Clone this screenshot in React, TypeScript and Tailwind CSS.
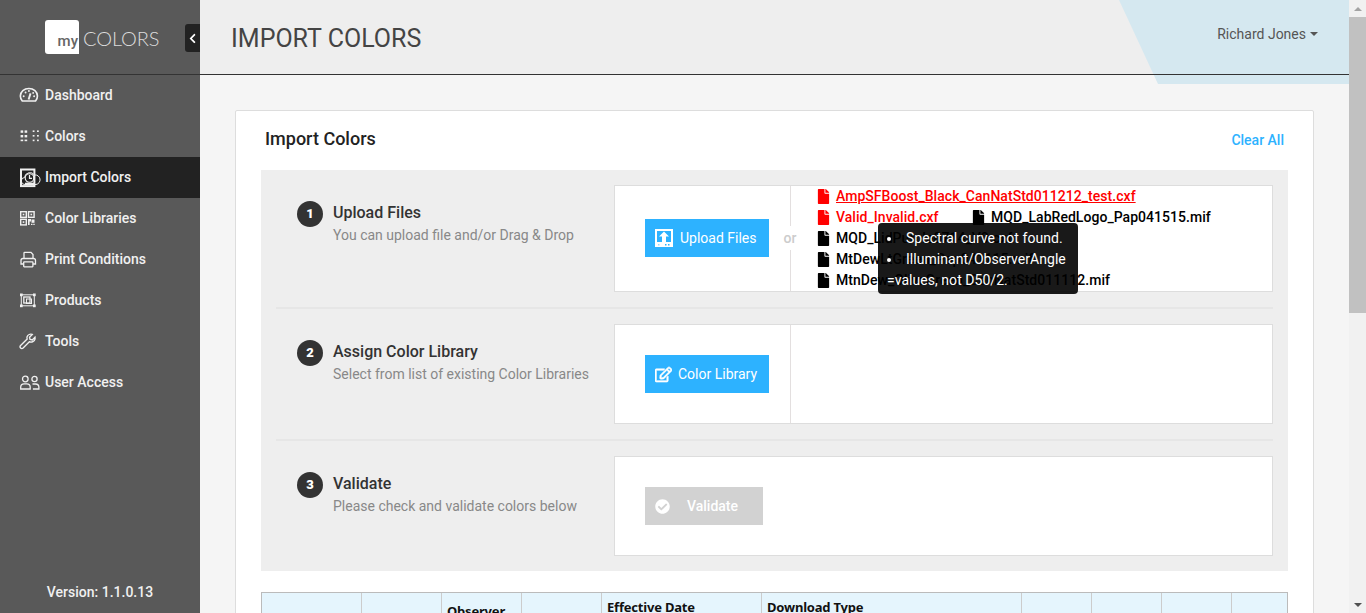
import { FaChevronLeft, FaFile, FaRegEdit, FaCheckCircle } from "react-icons/fa";

function Svg({ children }: { children: React.ReactNode }) {
  return (
    <svg width="20" height="20" viewBox="0 0 20 20" fill="none" stroke="currentColor" strokeWidth="1.3" className="shrink-0 overflow-visible">
      {children}
    </svg>
  );
}

const DashIcon = () => (
  <Svg>
    <g transform="translate(-.6 -.7) scale(.95)">
      <path d="M3 16.500C1.700 15 1 13.200 1 11.300 1 6.800 5 3.300 10 3.300s9 3.500 9 8c0 1.900-.7 3.700-2 5.200z" strokeWidth="1.700" />
      <path d="M9.700 15l2-6.500" strokeWidth="2" />
      <circle cx="4.500" cy="11.500" r="1" fill="currentColor" stroke="none" />
      <circle cx="6.500" cy="7.500" r="1" fill="currentColor" stroke="none" />
      <circle cx="10" cy="6" r="1" fill="currentColor" stroke="none" />
      <circle cx="14.500" cy="8" r="1" fill="currentColor" stroke="none" />
      <circle cx="15.500" cy="11.500" r="1" fill="currentColor" stroke="none" />
    </g>
  </Svg>
);
const ColorsIcon = () => (
  <svg width="20" height="20" viewBox="0 0 20 20" fill="currentColor" className="shrink-0">
    {[0, 1, 2].map((r) =>
      [0.6, 4.6, 12.7, 17].map((x, c) => (
        <rect key={`${r}${c}`} x={x} y={3.4 + r * 4.6} width={c < 2 ? 2.6 : 1.8} height={c < 2 && r < 2 ? 2.4 : 1.6} />
      ))
    )}
  </svg>
);
const ImportIcon = () => (
  <Svg>
    <rect x="1" y="1.500" width="13.400" height="16.600" strokeWidth="2" />
    <path d="M5 16.500a3.500 3.500 0 0 1-.5-7 5.500 5.500 0 0 1 10-2.500A4.800 4.800 0 0 1 16 16.500z" strokeWidth="1" />
    <circle cx="9.500" cy="10" r="4.300" strokeWidth="1.100" />
    <path d="M9.500 7v3.300h2.500" strokeWidth="1.200" />
    <path d="M5 15.500h9" strokeWidth="1.600" />
  </Svg>
);
const QrIcon = () => (
  <Svg>
    <rect x=".7" y="2.700" width="5.600" height="5.600" strokeWidth="1.400" />
    <rect x="8.500" y="2.700" width="5.600" height="5.600" strokeWidth="1.400" />
    <rect x=".7" y="10.300" width="5.600" height="5.600" strokeWidth="1.400" />
    <rect x="2.700" y="4.700" width="1.600" height="1.600" fill="currentColor" stroke="none" />
    <rect x="10.500" y="4.700" width="1.600" height="1.600" fill="currentColor" stroke="none" />
    <rect x="2.700" y="12.300" width="1.600" height="1.600" fill="currentColor" stroke="none" />
    <path d="M8 10v6h1.600v-3.400H11v-2.600z" fill="currentColor" stroke="none" />
    <path d="M11.500 10.500h3v3.300h-3z" fill="currentColor" stroke="none" />
    <path d="M11 15.300h1.500M13.300 15.300h1.400" strokeWidth="1.300" />
  </Svg>
);
const PrintIcon = () => (
  <Svg>
    <path d="M4 8.500V3c0-.3.300-.600.600-.600h6.400l2 2.200v3.900" />
    <path d="M3.500 14H1V10.500C1 9.300 1.900 8.500 3 8.500h10.500c1.100 0 2 .8 2 2V14H13" />
    <rect x="3.700" y="11.800" width="9.200" height="5" rx=".5" />
  </Svg>
);
const ProductIcon = () => (
  <Svg>
    <path d="M1.300 3.800h13v11h-13z" strokeWidth="1" />
    <rect x="0" y="2.500" width="2.700" height="2.700" fill="currentColor" stroke="none" />
    <rect x="13" y="2.500" width="2.700" height="2.700" fill="currentColor" stroke="none" />
    <rect x="0" y="13.500" width="2.700" height="2.700" fill="currentColor" stroke="none" />
    <rect x="13" y="13.500" width="2.700" height="2.700" fill="currentColor" stroke="none" />
    <rect x="3.800" y="6" width="6.200" height="6" />
    <rect x="6.500" y="8" width="5" height="4.500" strokeWidth="1" />
  </Svg>
);
const WrenchIcon = () => (
  <Svg>
    <g transform="translate(-1.200 .3) scale(.9)">
      <path d="M18 5.500l-3 3-2.500-.6-.6-2.500 3-3c-2.300-.8-4.800.2-5.600 2.300-.4 1-.3 2 0 2.800L2 14.700c-.9.900-.9 2 0 2.800s1.900.8 2.800 0L11.700 10.500c2.700 1 5.800-.4 6.300-3 .1-.7.100-1.400 0-2z" strokeWidth="1.500" />
    </g>
  </Svg>
);
const UsersIcon = () => (
  <Svg>
    <circle cx="5.300" cy="6" r="2.800" />
    <circle cx="14.500" cy="6" r="2.600" />
    <path d="M.7 16v-1.800c0-2 1.400-3.400 3.400-3.400h2.700c2 0 3.400 1.400 3.400 3.400V16z" />
    <path d="M12.500 11h3c2 0 3.400 1.300 3.400 3.300V16h-6" />
  </Svg>
);

const NAV: { label: string; icon: React.ReactNode; active?: boolean }[] = [
  { label: "Dashboard", icon: <DashIcon /> },
  { label: "Colors", icon: <ColorsIcon /> },
  { label: "Import Colors", icon: <ImportIcon />, active: true },
  { label: "Color Libraries", icon: <QrIcon /> },
  { label: "Print Conditions", icon: <PrintIcon /> },
  { label: "Products", icon: <ProductIcon /> },
  { label: "Tools", icon: <WrenchIcon /> },
  { label: "User Access", icon: <UsersIcon /> },
];

function Sidebar() {
  return (
    <aside className="w-[200px] shrink-0 bg-[#595959] flex flex-col h-full">
      <div className="h-[75px] border-b border-[#333333] shrink-0 flex items-center relative">
        <div className="ml-[45px] w-[34px] h-[34px] bg-white rounded-[3px] rounded-br-none flex items-end justify-end">
          <span className="text-[15px] font-medium text-[#666666] leading-[26px] mr-[1px]">my</span>
        </div>
        <span className="ml-[4px] text-[20px] leading-none font-light text-[#dcdcdc] font-['Lato'] tracking-[-0.1px] mt-[1px]">COLORS</span>
        <div className="absolute right-0 top-[24px] w-[15px] h-[28px] bg-[#222222] rounded-l-[3px] flex items-center justify-center text-white">
          <FaChevronLeft size={11} />
        </div>
      </div>
      <nav className="flex flex-col flex-1">
        {NAV.map((n) => (
          <div
            key={n.label}
            className={`h-[41px] flex items-center pl-[20px] gap-[5px] text-[14px] font-medium text-[#f0f0f0] ${n.active ? "bg-[#222222]" : ""}`}
          >
            {n.icon}
            <span>{n.label}</span>
          </div>
        ))}
      </nav>
      <div className="text-center text-[14px] font-medium text-[#f0f0f0] pb-[10px]">Version: 1.1.0.13</div>
    </aside>
  );
}

function StepInfo({ n, title, sub }: { n: number; title: string; sub: string }) {
  return (
    <div className="w-[338px] shrink-0 pl-[21px] pt-[16px] flex gap-[10px]">
      <div className="w-[26px] h-[26px] rounded-full bg-[#333333] text-white text-[13px] font-black flex items-center justify-center shrink-0">
        {n}
      </div>
      <div>
        <div className="text-[16px] font-medium text-[#333333] leading-[24px]">{title}</div>
        <div className="text-[14px] text-[#888888] leading-[21px]">{sub}</div>
      </div>
    </div>
  );
}

function FileRow({ name, red, underline }: { name: string; red?: boolean; underline?: boolean }) {
  return (
    <div className={`h-[21px] flex items-center gap-[5px] tracking-[0.04px] ${red ? "text-[#ff0000]" : "text-black"}`}>
      <FaFile size={15} className="shrink-0" />
      <span className={underline ? "underline" : ""}>{name}</span>
    </div>
  );
}

const UploadIcon = () => (
  <svg width="18" height="18" viewBox="0 0 18 18" className="shrink-0">
    <rect width="18" height="18" fill="white" />
    <rect x="2" y="2" width="14" height="11" fill="#2db2ff" />
    <path d="M9 2.500l5 5h-3v5.500H7V7.500H4z" fill="white" />
    <rect x="3" y="15" width="1.500" height="1.500" fill="#9bd8ff" />
    <rect x="10" y="15" width="1.500" height="1.500" fill="#2db2ff" />
    <rect x="13" y="15" width="1.500" height="1.500" fill="#2db2ff" />
  </svg>
);

const COLS = [100, 80, 80, 80, 160, 260, 70, 70, 70, 56];

function Table() {
  const heads = ["", "", "Observer", "", "Effective Date", "Download Type", "", "", "", ""];
  return (
    <div className="mt-[21px] mx-[25px] flex border border-[#bbbbbb] bg-[#e5f5fd] h-[60px]">
      {heads.map((h, i) => (
        <div
          key={i}
          style={{ width: COLS[i] }}
          className={`shrink-0 border-r last:border-r-0 border-[#cccccc] px-[5px] text-[13px] font-bold font-['Noto_Sans'] tracking-[-0.2px] text-[#111111] leading-[16px] ${h === "Observer" ? "pt-[10px]" : "pt-[6px]"}`}
        >
          {h}
        </div>
      ))}
    </div>
  );
}

export default function App() {
  return (
    <div className="h-[613px] w-[1366px] overflow-hidden flex font-['Roboto',sans-serif] bg-[#f5f5f5]">
      <Sidebar />
      <div className="flex-1 min-w-0 flex flex-col h-full relative">
        <header className="h-[75px] shrink-0 bg-[#eeeeee] flex items-center pl-[31px]">
          <h1 className="text-[25px] text-[#444444] leading-none font-normal mt-[2px]">IMPORT COLORS</h1>
        </header>
        <div className="absolute top-0 right-0 w-[230px] h-[84px] bg-[#d5e8f0] [clip-path:polygon(0_0,100%_0,100%_100%,39px_100%)]" />
        <div className="absolute top-[74px] left-0 right-0 h-[1px] bg-[#333333]" />
        <div className="absolute top-0 right-[31px] mt-[24px] flex items-center gap-[4px] text-[14px] text-[#555555]">
          Richard Jones
          <span className="w-0 h-0 border-x-[4px] border-x-transparent border-t-[4px] border-t-[#555555] mb-[2px]" />
        </div>
        <main className="relative px-[35px] pt-[35px] flex-1 min-h-0">
          <section className="bg-white border border-[#dddddd] rounded-[2px] h-[600px]">
            <div className="h-[59px] flex items-center justify-between px-[29px] pb-[4px]">
              <h2 className="text-[18px] font-medium text-[#222222]">Import Colors</h2>
              <a className="text-[14px] font-medium text-[#2db2ff] mt-[3px]">Clear All</a>
            </div>
            <div className="mx-[25px] bg-[#eeeeee] px-[15px]">
              <div className="flex py-[15px] border-b-2 border-[#e6e6e6]">
                <StepInfo n={1} title="Upload Files" sub="You can upload file and/or Drag & Drop" />
                <div className="flex-1 h-[107px] bg-white border border-[#dddddd] flex relative">
                  <div className="w-[176px] shrink-0 flex items-center pl-[30px] pb-[2px] border-r border-[#e3dfdf] relative">
                    <button className="w-[124px] h-[38px] bg-[#2db2ff] text-white text-[14px] flex items-center pl-[10px] gap-[7px]">
                      <UploadIcon />
                      <span className="mt-[2px]">Upload Files</span>
                    </button>
                    <span className="absolute right-[-9px] top-[40px] bg-white py-[4px] text-[14px] font-medium text-[#cccccc] leading-[16px] w-[18px] text-center">or</span>
                  </div>
                  <div className="flex-1 pl-[25px] text-[14px] font-medium leading-[21px]">
                    <FileRow name="AmpSFBoost_Black_CanNatStd011212_test.cxf" red underline />
                    <div className="flex">
                      <div className="w-[155px]"><FileRow name="Valid_Invalid.cxf" red /></div>
                      <FileRow name="MQD_LabRedLogo_Pap041515.mif" />
                    </div>
                    <FileRow name="MQD_LidPurple0714_V0.cxf" />
                    <FileRow name="MtDewLtGreen_Pap041115.mif" />
                    <FileRow name="MtnDew_OliveGreen_CanNatStd011112.mif" />
                  </div>
                  <div className="absolute left-[263px] top-[37px] w-[200px] h-[71px] bg-black/90 rounded-[4px] text-white text-[14px] leading-[21px] pl-[9px] pr-[8px] pt-[5px] font-normal tracking-[0.04px]">
                    <ul className="list-disc list-inside">
                      <li>Spectral curve not found.</li>
                      <li>Illuminant/ObserverAngle =values, not D50/2.</li>
                    </ul>
                  </div>
                </div>
              </div>
              <div className="flex py-[15px] border-b-2 border-[#e6e6e6]">
                <StepInfo n={2} title="Assign Color Library" sub="Select from list of existing Color Libraries" />
                <div className="flex-1 h-[100px] bg-white border border-[#dddddd] flex">
                  <div className="w-[176px] shrink-0 flex items-center pl-[30px] border-r border-[#e3dfdf]">
                    <button className="w-[124px] h-[38px] bg-[#2db2ff] text-white text-[14px] flex items-center pl-[10px] gap-[6px]">
                      <FaRegEdit size={17} stroke="currentColor" strokeWidth={20} />
                      Color Library
                    </button>
                  </div>
                </div>
              </div>
              <div className="flex py-[15px]">
                <StepInfo n={3} title="Validate" sub="Please check and validate colors below" />
                <div className="flex-1 h-[100px] bg-white border border-[#dddddd] flex items-center pl-[30px]">
                  <button className="w-[118px] h-[38px] bg-[#d2d2d2] text-white text-[14px] font-medium flex items-center pl-[10px] gap-[17px]">
                    <FaCheckCircle size={15} />
                    Validate
                  </button>
                </div>
              </div>
            </div>
            <Table />
          </section>
        </main>
      </div>
      <div className="w-[17px] shrink-0 bg-[#f1f1f1] flex flex-col items-center h-full">
        <div className="h-[17px] flex items-center justify-center shrink-0">
          <span className="w-0 h-0 border-x-[4px] border-x-transparent border-b-[4px] border-b-[#a3a3a3]" />
        </div>
        <div className="w-full h-[296px] bg-[#c1c1c1] shrink-0" />
        <div className="flex-1" />
        <div className="h-[17px] flex items-center justify-center shrink-0">
          <span className="w-0 h-0 border-x-[4px] border-x-transparent border-t-[4px] border-t-[#505050]" />
        </div>
      </div>
    </div>
  );
}
